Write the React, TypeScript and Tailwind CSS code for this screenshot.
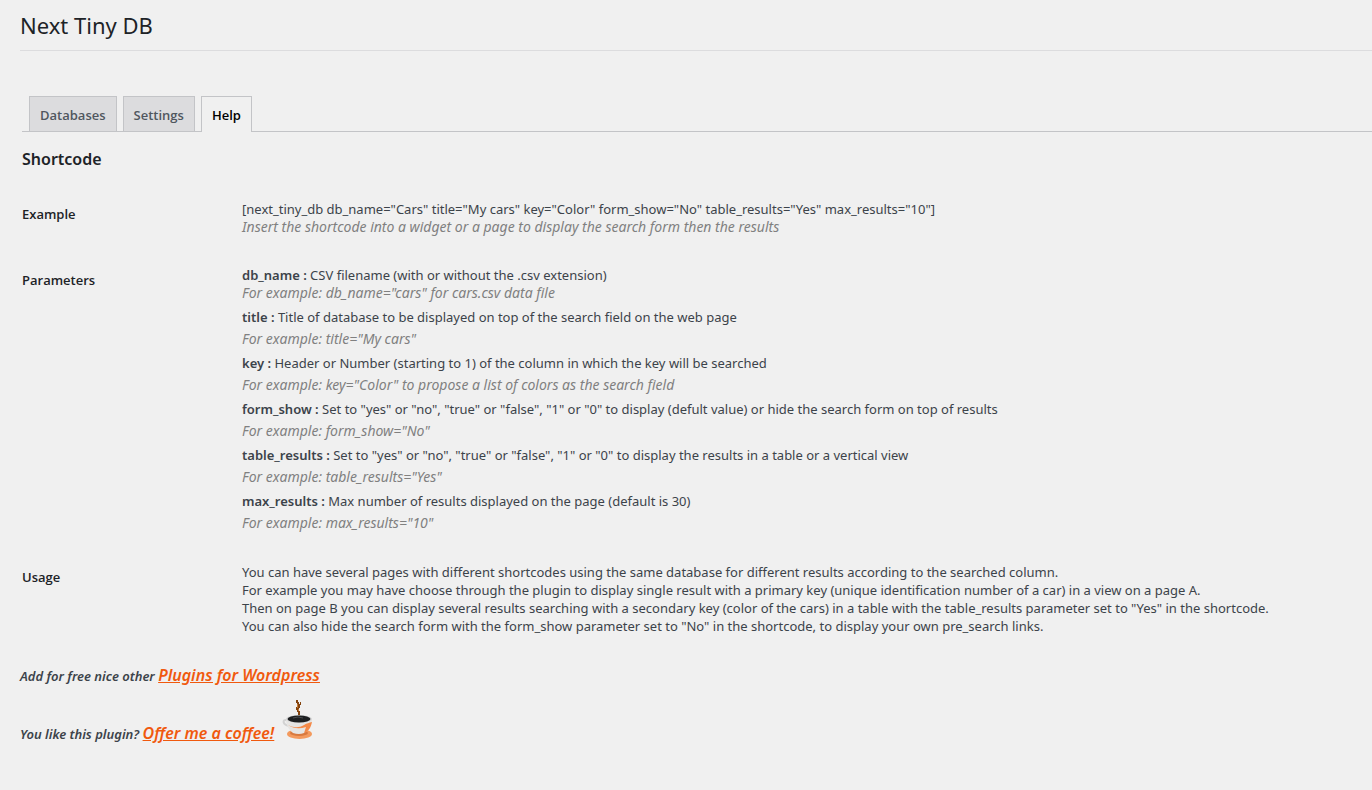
import type { ReactNode } from "react";

const tabs = [
  { label: "Databases", active: false },
  { label: "Settings", active: false },
  { label: "Help", active: true },
];

const parameters = [
  {
    name: "title",
    text: "Title of database to be displayed on top of the search field on the web page",
    example: 'title="My cars"',
  },
  {
    name: "key",
    text: "Header or Number (starting to 1) of the column in which the key will be searched",
    example: 'key="Color" to propose a list of colors as the search field',
  },
  {
    name: "form_show",
    text: 'Set to "yes" or "no", "true" or "false", "1" or "0" to display (defult value) or hide the search form on top of results',
    example: 'form_show="No"',
  },
  {
    name: "table_results",
    text: 'Set to "yes" or "no", "true" or "false", "1" or "0" to display the results in a table or a vertical view',
    example: 'table_results="Yes"',
  },
  {
    name: "max_results",
    text: "Max number of results displayed on the page (default is 30)",
    example: 'max_results="10"',
  },
];

function Row({ label, children }: { label: string; children: ReactNode }) {
  return (
    <tr className="align-top">
      <th scope="row" className="w-[220px] pt-5 text-left font-['Open_Sans','Noto_Sans',sans-serif] font-semibold text-[#1d2327]">
        {label}
      </th>
      <td className="py-[15px]">{children}</td>
    </tr>
  );
}

function Hint({ children }: { children: ReactNode }) {
  return <p className="text-[14px] text-[#808080] italic">{children}</p>;
}

function PromoLink({ children }: { children: ReactNode }) {
  return (
    <a href="#" className="text-base leading-[18px] font-semibold text-[#f0590e] underline">
      {children}
    </a>
  );
}

function CoffeeCup() {
  return (
    <svg viewBox="0 0 32 42" className="ml-2 inline-block h-[42px] w-8 align-[-2px]" aria-hidden="true">
      <path
        d="M14 1h2v2h1v2h1v-2h1v3h-1v3h-1v3h1v4h-2v-3h-1v-2h-1v-3h1v-4h-1z"
        fill="#84440f"
      />
      <path d="M15 5h1v4h-1zM16 10h1v2h-1z" fill="#c77b35" />
      <ellipse cx="17.500" cy="35" rx="12.500" ry="5" fill="#f39a5e" />
      <ellipse cx="17" cy="34" rx="9" ry="3" fill="#d8793f" />
      <path d="M5 21C0 20 0 26 8 27" fill="none" stroke="#d2d2d2" strokeWidth="2" />
      <path d="M4 20C4 26 7 31 11 34q6 2 11 0c5-3 8-8 8-14z" fill="#e6e5e3" />
      <path d="M6 26c6 3 11 3 16 0 3-2 5-2 8-3-1 5-3 9-8 11l2-6c-6 2-12 2-18-2z" fill="#f48a49" />
      <ellipse cx="17" cy="20" rx="13" ry="4" fill="#d8d8d8" />
      <ellipse cx="17" cy="20" rx="11.500" ry="3.500" fill="#1d1f21" />
      <path d="M11 19q5-2 10 0" fill="none" stroke="#4b4c4e" />
    </svg>
  );
}

export default function App() {
  return (
    <main className="min-h-screen bg-[#f0f0f0] pl-5 font-['Noto_Sans','Open_Sans',sans-serif] text-[13px] leading-[18px] text-[#3c434a]">
      <h1 className="border-b border-[#dcdcde] pt-2.5 pb-[9px] text-[22px] leading-[31px] text-[#1d2327]">
        Next Tiny DB
      </h1>

      <div className="pl-0.5">
        <nav className="mt-[45px] flex gap-1.5 border-b border-[#c3c4c7] pl-[7px] font-['Open_Sans','Noto_Sans',sans-serif] leading-6 font-semibold">
          {tabs.map((tab) => (
            <a
              key={tab.label}
              href="#"
              aria-current={tab.active ? "page" : undefined}
              className={
                tab.active
                  ? "-mb-px border border-b-0 border-[#c3c4c7] bg-[#f0f0f0] px-2.5 pt-1.5 pb-[5px] text-black"
                  : "border border-b-0 border-[#c3c4c7] bg-[#dcdcde] px-2.5 pt-1.5 pb-1 text-[#50575e]"
              }
            >
              {tab.label}
            </a>
          ))}
        </nav>

        <h2 className="mt-4 mb-[15px] text-base leading-[22px] font-semibold text-[#1d2327]">Shortcode</h2>

        <table className="w-full">
          <tbody>
            <Row label="Example">
              <p>
                [next_tiny_db db_name="Cars" title="My cars" key="Color" form_show="No" table_results="Yes"
                max_results="10"]
              </p>
              <Hint>Insert the shortcode into a widget or a page to display the search form then the results</Hint>
            </Row>
            <Row label="Parameters">
              <div className="pb-px">
                <p>
                  <strong className="font-semibold">db_name :</strong> CSV filename (with or without the .csv extension)
                </p>
                <Hint>For example: db_name="cars" for cars.csv data file</Hint>
              </div>
              {parameters.map((p) => (
                <div key={p.name} className="mt-1 leading-[21px]">
                  <p>
                    <strong className="font-semibold">{p.name} :</strong> {p.text}
                  </p>
                  <Hint>For example: {p.example}</Hint>
                </div>
              ))}
            </Row>
            <Row label="Usage">
              <p>
                You can have several pages with different shortcodes using the same database for different results
                according to the searched column.
              </p>
              <p>
                For example you may have choose through the plugin to display single result with a primary key (unique
                identification number of a car) in a view on a page A.
              </p>
              <p>
                Then on page B you can display several results searching with a secondary key (color of the cars) in a
                table with the table_results parameter set to "Yes" in the shortcode.
              </p>
              <p>
                You can also hide the search form with the form_show parameter set to "No" in the shortcode, to display
                your own pre_search links.
              </p>
            </Row>
          </tbody>
        </table>
      </div>

      <footer className="pt-4 font-semibold italic">
        <p>
          Add for free nice other <PromoLink>Plugins for Wordpress</PromoLink>
        </p>
        <p className="mt-3.5">
          You like this plugin? <PromoLink>Offer me a coffee!</PromoLink>
          <CoffeeCup />
        </p>
      </footer>
    </main>
  );
}
